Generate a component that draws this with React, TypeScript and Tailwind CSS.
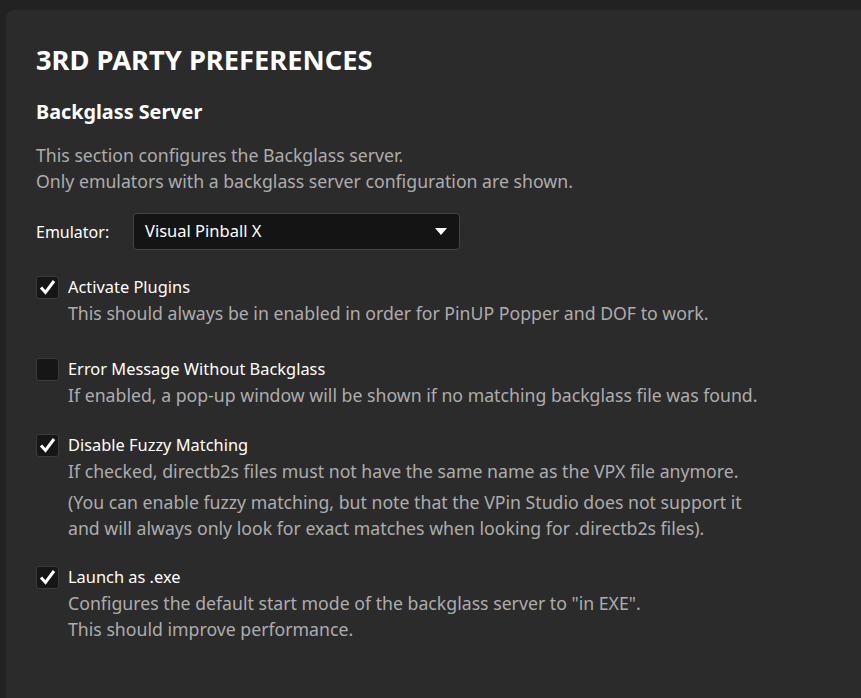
import React from 'react';

const font = { fontFamily: '"Segoe UI", "Noto Sans", "Open Sans", sans-serif' };

interface PrefItem {
  label: string;
  checked: boolean;
  lines: string[];
  notes?: string[];
  gap: string;
}

const items: PrefItem[] = [
  {
    label: 'Activate Plugins',
    checked: true,
    lines: ['This should always be in enabled in order for PinUP Popper and DOF to work.'],
    gap: 'mt-[24px]',
  },
  {
    label: 'Error Message Without Backglass',
    checked: false,
    lines: ['If enabled, a pop-up window will be shown if no matching backglass file was found.'],
    gap: 'mt-[30px]',
  },
  {
    label: 'Disable Fuzzy Matching',
    checked: true,
    lines: ['If checked, directb2s files must not have the same name as the VPX file anymore.'],
    notes: [
      '(You can enable fuzzy matching, but note that the VPin Studio does not support it',
      'and will always only look for exact matches when looking for .directb2s files).',
    ],
    gap: 'mt-[24px]',
  },
  {
    label: 'Launch as .exe',
    checked: true,
    lines: [
      'Configures the default start mode of the backglass server to "in EXE".',
      'This should improve performance.',
    ],
    gap: 'mt-[23px]',
  },
];

const Checkbox: React.FC<{ checked: boolean }> = ({ checked }) => (
  <div className="w-[23px] h-[23px] shrink-0 rounded-[3px] border border-[#3c3c3c] bg-[#161616] flex items-center justify-center">
    {checked && (
      <svg width="17" height="16" viewBox="0 0 17 16">
        <path d="M2 8.5 L6.5 13.5 L15 2" fill="none" stroke="#ffffff" strokeWidth="3" strokeLinejoin="miter" />
      </svg>
    )}
  </div>
);

const App: React.FC = () => {
  return (
    <div className="w-[861px] h-[698px] bg-[#222222] pt-[10px] pl-[6px] overflow-hidden" style={font}>
      <div className="h-full bg-[#2b2b2b] rounded-tl-[8px] pl-[30px] pt-[30px]">
        <h1 className="text-[27.3px] font-bold text-white leading-[40px]">3RD PARTY PREFERENCES</h1>
        <h2 className="text-[19.8px] font-bold text-white leading-[28px] mt-[18px]">Backglass Server</h2>

        <div className="mt-[16px] text-[17.7px] leading-[26px] text-[#adadad]">
          <p>This section configures the Backglass server.</p>
          <p>Only emulators with a backglass server configuration are shown.</p>
        </div>

        <div className="flex items-center mt-[19px]">
          <span className="w-[97px] text-[16px] text-white">Emulator:</span>
          <div className="w-[327px] h-[37px] rounded-[4px] border border-[#444444] bg-[#141414] flex items-center justify-between pl-[11px] pr-[12px]">
            <span className="text-[16.5px] text-white">Visual Pinball X</span>
            <svg width="12" height="8" viewBox="0 0 12 8">
              <path d="M0 0 L12 0 L6 7 Z" fill="#ffffff" />
            </svg>
          </div>
        </div>

        {items.map((item, i) => (
          <div key={i} className={item.gap}>
            <div className="flex items-center gap-[9px] h-[26px]">
              <Checkbox checked={item.checked} />
              <span className="text-[16.4px] text-white leading-[26px]">{item.label}</span>
            </div>
            <div className="pl-[32px] text-[17.7px] leading-[26px] text-[#adadad]">
              {item.lines.map((l, j) => (
                <p key={j}>{l}</p>
              ))}
              {item.notes && (
                <div className="mt-[5px]">
                  {item.notes.map((l, j) => (
                    <p key={j}>{l}</p>
                  ))}
                </div>
              )}
            </div>
          </div>
        ))}
      </div>
    </div>
  );
};

export default App;
